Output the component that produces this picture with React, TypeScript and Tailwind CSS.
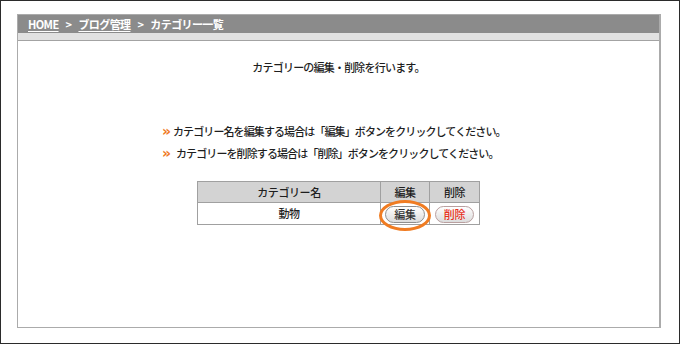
const jp = { fontFamily: '"Noto Sans CJK JP", "Noto Sans", sans-serif' };

const PillButton = ({ label, danger }: { label: string; danger?: boolean }) => (
  <button
    className={
      "h-[17px] px-[8px] rounded-full border bg-gradient-to-b from-white to-[#dcdcdc] text-[11px] leading-[15px] tracking-[-0.3px] " +
      (danger ? "border-[#b9a0a0] text-[#e8311d]" : "border-[#8f8f8f] text-[#333]")
    }
    style={jp}
  >
    {label}
  </button>
);

export default function App() {
  return (
    <div className="w-[680px] h-[344px] border border-[#2b2b2b] bg-white pl-[16px] pt-[13px]" style={jp}>
      <div className="w-[644px] h-[314px] border border-[#ababab] border-r-2 flex flex-col">
        {/* breadcrumb */}
        <div className="h-[18px] bg-[#8b8b8b] pl-[10px] flex items-center gap-[7px] text-[11px] font-bold text-white tracking-[-0.6px]">
          <span className="underline underline-offset-2">HOME</span>
          <span>&gt;</span>
          <span className="underline underline-offset-2">ブログ管理</span>
          <span>&gt;</span>
          <span>カテゴリー一覧</span>
        </div>
        <div className="h-[8px] bg-[#e1e1e1] border-b border-[#a3a3a3]" />

        <p className="mt-[18px] text-center text-[11px] leading-[16px] font-medium text-[#1e1e1e] tracking-[-0.8px]">
          カテゴリーの編集・削除を行います。
        </p>

        <div className="mt-[45px] pl-[144px] text-[11px] leading-[22px] font-medium text-[#1e1e1e] tracking-[-0.9px]">
          <div className="flex items-center">
            <span className="text-[#ef7a1f] text-[14px] font-bold w-[11px] tracking-normal" style={{ fontFamily: '"DejaVu Sans", sans-serif' }}>»</span>
            <span>カテゴリー名を編集する場合は「編集」ボタンをクリックしてください。</span>
          </div>
          <div className="flex items-center">
            <span className="text-[#ef7a1f] text-[14px] font-bold w-[14px] tracking-normal" style={{ fontFamily: '"DejaVu Sans", sans-serif' }}>»</span>
            <span>カテゴリーを削除する場合は「削除」ボタンをクリックしてください。</span>
          </div>
        </div>

        <table className="mt-[17px] mx-auto w-[283px] border-collapse text-[11px] font-medium text-[#1e1e1e] tracking-[-0.4px]">
          <thead>
            <tr className="bg-[#d3d3d3] h-[21px]">
              <th className="border border-[#a0a0a0] font-medium w-[183px]">カテゴリー名</th>
              <th className="border border-[#a0a0a0] font-medium w-[49px]">編集</th>
              <th className="border border-[#a0a0a0] font-medium">削除</th>
            </tr>
          </thead>
          <tbody>
            <tr className="h-[22px]">
              <td className="border border-[#a0a0a0] text-center">動物</td>
              <td className="border border-[#a0a0a0] text-center">
                <div className="relative inline-flex align-middle">
                  <PillButton label="編集" />
                  <div className="absolute left-[-6px] top-[-6px] w-[52px] h-[31px] rounded-[50%] border-[3px] border-[#f07c22]" />
                </div>
              </td>
              <td className="border border-[#a0a0a0] text-center">
                <div className="inline-flex align-middle">
                  <PillButton label="削除" danger />
                </div>
              </td>
            </tr>
          </tbody>
        </table>
      </div>
    </div>
  );
}
